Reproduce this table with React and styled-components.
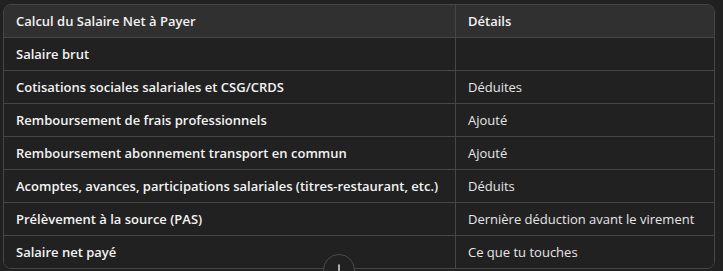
import React from 'react';
import styled, { createGlobalStyle } from 'styled-components';

const GlobalStyle = createGlobalStyle`
  html, body {
    margin: 0;
    padding: 0;
    background: #212121;
  }
  body {
    font-family: 'Open Sans', 'Noto Sans', sans-serif;
    color: #ececec;
  }
`;

const rows = [
  { label: 'Salaire brut', detail: '' },
  { label: 'Cotisations sociales salariales et CSG/CRDS', detail: 'Déduites' },
  { label: 'Remboursement de frais professionnels', detail: 'Ajouté' },
  { label: 'Remboursement abonnement transport en commun', detail: 'Ajouté' },
  { label: 'Acomptes, avances, participations salariales (titres-restaurant, etc.)', detail: 'Déduits' },
  { label: 'Prélèvement à la source (PAS)', detail: 'Dernière déduction avant le virement' },
  { label: 'Salaire net payé', detail: 'Ce que tu touches' },
];

const Page = styled.div`
  position: relative;
  width: 723px;
  height: 271px;
  overflow: hidden;
  padding: 4px 8px 0 3px;
  box-sizing: border-box;
`;

const Frame = styled.div`
  border: 1px solid #464646;
  border-radius: 8px;
  overflow: hidden;
`;

const Table = styled.div`
  display: grid;
  grid-template-columns: 452px 1fr;
`;

const Cell = styled.div`
  height: 32px;
  display: flex;
  align-items: center;
  padding: 0 12px;
  font-size: 13px;
  font-weight: ${p => (p.$bold ? 600 : 400)};
  background: ${p => (p.$head ? '#303030' : '#212121')};
  border-bottom: ${p => (p.$last ? 'none' : '1px solid #464646')};
  border-right: ${p => (p.$left ? '1px solid #464646' : 'none')};
  white-space: nowrap;
  color: ${p => (p.$bold ? '#f3f3f3' : '#e6e6e6')};
`;

const ScrollButton = styled.div`
  position: absolute;
  left: 323px;
  top: 254px;
  width: 32px;
  height: 32px;
  border-radius: 50%;
  border: 1px solid #4a4a4a;
  background: #212121;
  display: flex;
  justify-content: center;
  padding-top: 8px;
  box-sizing: border-box;
`;

export default function App() {
  return (
    <>
      <GlobalStyle />
      <Page>
        <Frame>
          <Table>
            <Cell $head $bold $left>Calcul du Salaire Net à Payer</Cell>
            <Cell $head $bold>Détails</Cell>
            {rows.map((r, i) => (
              <React.Fragment key={r.label}>
                <Cell $bold $left $last={i === rows.length - 1}>{r.label}</Cell>
                <Cell $last={i === rows.length - 1}>{r.detail}</Cell>
              </React.Fragment>
            ))}
          </Table>
        </Frame>
        <ScrollButton>
          <svg width="16" height="16" viewBox="0 0 24 24" fill="none" stroke="#e0e0e0" strokeWidth="2.2" strokeLinecap="round" strokeLinejoin="round">
            <path d="M12 3v16" />
            <path d="M6 13l6 6 6-6" />
          </svg>
        </ScrollButton>
      </Page>
    </>
  );
}
